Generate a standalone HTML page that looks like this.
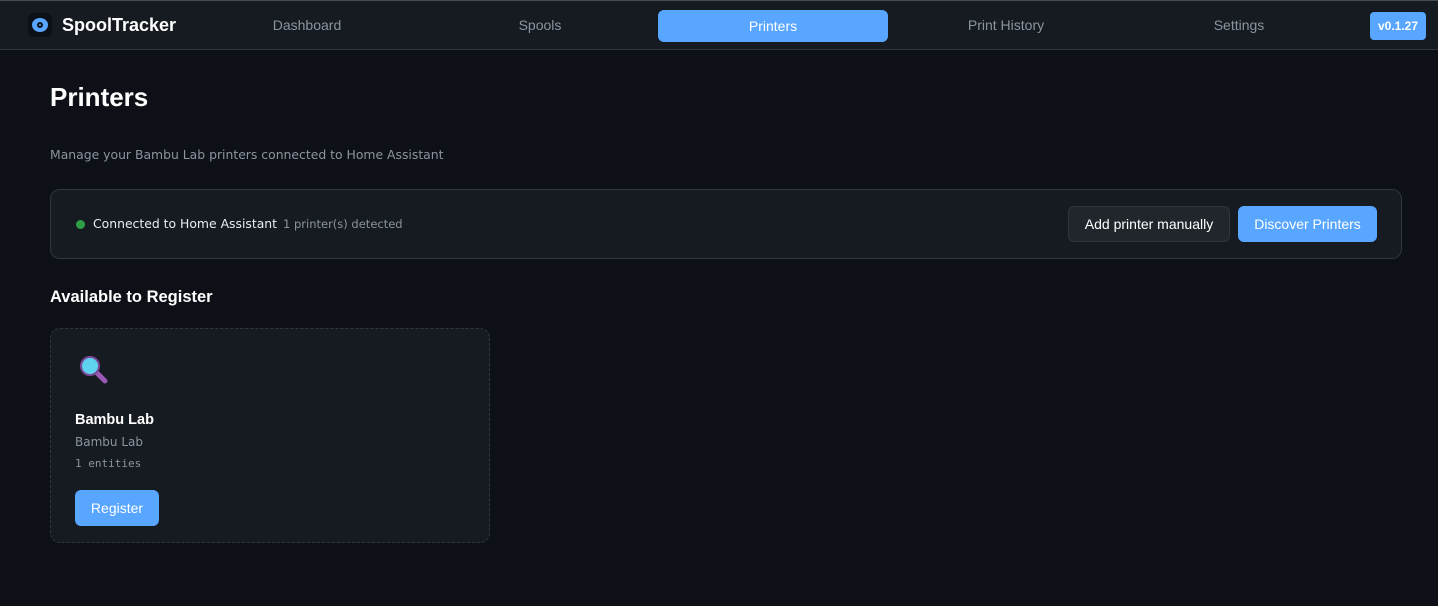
<!DOCTYPE html>
<html><head><meta charset="utf-8"><style>
*{box-sizing:border-box;margin:0;padding:0}
body{width:1438px;height:606px;background:#0d1117;color:#e6edf3;font-family:"DejaVu Sans",sans-serif;overflow:hidden;position:relative}
.nav{position:absolute;left:0;top:0;width:1438px;height:50px;background:#161b22;border-top:1px solid #444c56;border-bottom:1px solid #30363d}
.logo{position:absolute;left:28px;top:12px;width:24px;height:24px;border-radius:5px;background:#0d1117}
.logo i{position:absolute;left:4px;top:5px;width:16px;height:14px;border-radius:50%;background:#58a6ff}
.logo b{position:absolute;left:9px;top:9px;width:6px;height:6px;border-radius:50%;border:2px solid #0d1117;background:#58a6ff}
.brand{position:absolute;left:62px;top:14px;font:bold 18px "Liberation Sans",sans-serif;color:#fff}
.nl{position:absolute;top:8px;height:32px;text-align:center;font:14px "Liberation Sans",sans-serif;line-height:32px;color:#8b949e;width:230px}
.act{background:#58a6ff;color:#fff;border-radius:6px}
.ver{position:absolute;left:1370px;top:11px;width:56px;height:28px;background:#58a6ff;border-radius:4px;color:#fff;font:bold 12px "Liberation Sans",sans-serif;line-height:28px;text-align:center}
h1{position:absolute;left:50px;top:82px;font:bold 26px "Liberation Sans",sans-serif;color:#fff}
.sub{position:absolute;left:50px;top:147px;font-size:12.4px;color:#8b949e}
.bar{position:absolute;left:50px;top:189px;width:1352px;height:70px;background:#161b22;border:1px solid #30363d;border-radius:10px}
.dot{position:absolute;left:25px;top:30px;width:9px;height:9px;border-radius:50%;background:#2ea043}
.ct{position:absolute;left:42px;top:26px;font-size:12.4px;color:#e6edf3}
.ct span{color:#8b949e;font-size:11.5px;margin-left:6px}
.btn{position:absolute;height:36px;border-radius:6px;font:14px "Liberation Sans",sans-serif;line-height:34px;text-align:center}
h2{position:absolute;left:50px;top:288px;font:bold 16.5px "Liberation Sans",sans-serif;color:#fff}
.card{position:absolute;left:50px;top:328px;width:440px;height:215px;background:#161b22;border:1px dashed #30363d;border-radius:10px}
</style></head><body>
<div class="nav">
<div class="logo"><i></i><b></b></div>
<div class="brand">SpoolTracker</div>
<div class="nl" style="left:192px">Dashboard</div>
<div class="nl" style="left:425px">Spools</div>
<div class="nl act" style="left:658px;top:9px">Printers</div>
<div class="nl" style="left:891px">Print History</div>
<div class="nl" style="left:1124px">Settings</div>
<div class="ver">v0.1.27</div>
</div>
<h1>Printers</h1>
<div class="sub">Manage your Bambu Lab printers connected to Home Assistant</div>
<div class="bar"><div class="dot"></div><div class="ct">Connected to Home Assistant<span>1 printer(s) detected</span></div>
<div class="btn" style="left:1017px;top:16px;width:162px;background:#21262d;border:1px solid #30363d;color:#fff">Add printer manually</div>
<div class="btn" style="left:1187px;top:16px;width:139px;background:#58a6ff;color:#fff;line-height:36px">Discover Printers</div>
</div>
<h2>Available to Register</h2>
<div class="card">
<svg style="position:absolute;left:27px;top:25px" width="32" height="32" viewBox="0 0 32 32"><line x1="17" y1="17" x2="27" y2="27" stroke="#9b59b6" stroke-width="5" stroke-linecap="round"/><circle cx="12" cy="12" r="9" fill="#5ed3f0" stroke="#7a4a9a" stroke-width="2"/></svg>
<div style="position:absolute;left:24px;top:83px;font:bold 14.5px 'Liberation Sans',sans-serif;color:#fff">Bambu Lab</div>
<div style="position:absolute;left:24px;top:106px;font-size:12px;color:#8b949e">Bambu Lab</div>
<div style="position:absolute;left:24px;top:128px;font:11px 'DejaVu Sans Mono',monospace;color:#8b949e">1 entities</div>
<div class="btn" style="left:24px;top:161px;width:84px;background:#58a6ff;color:#fff;line-height:36px">Register</div>
</div>
</body></html>
